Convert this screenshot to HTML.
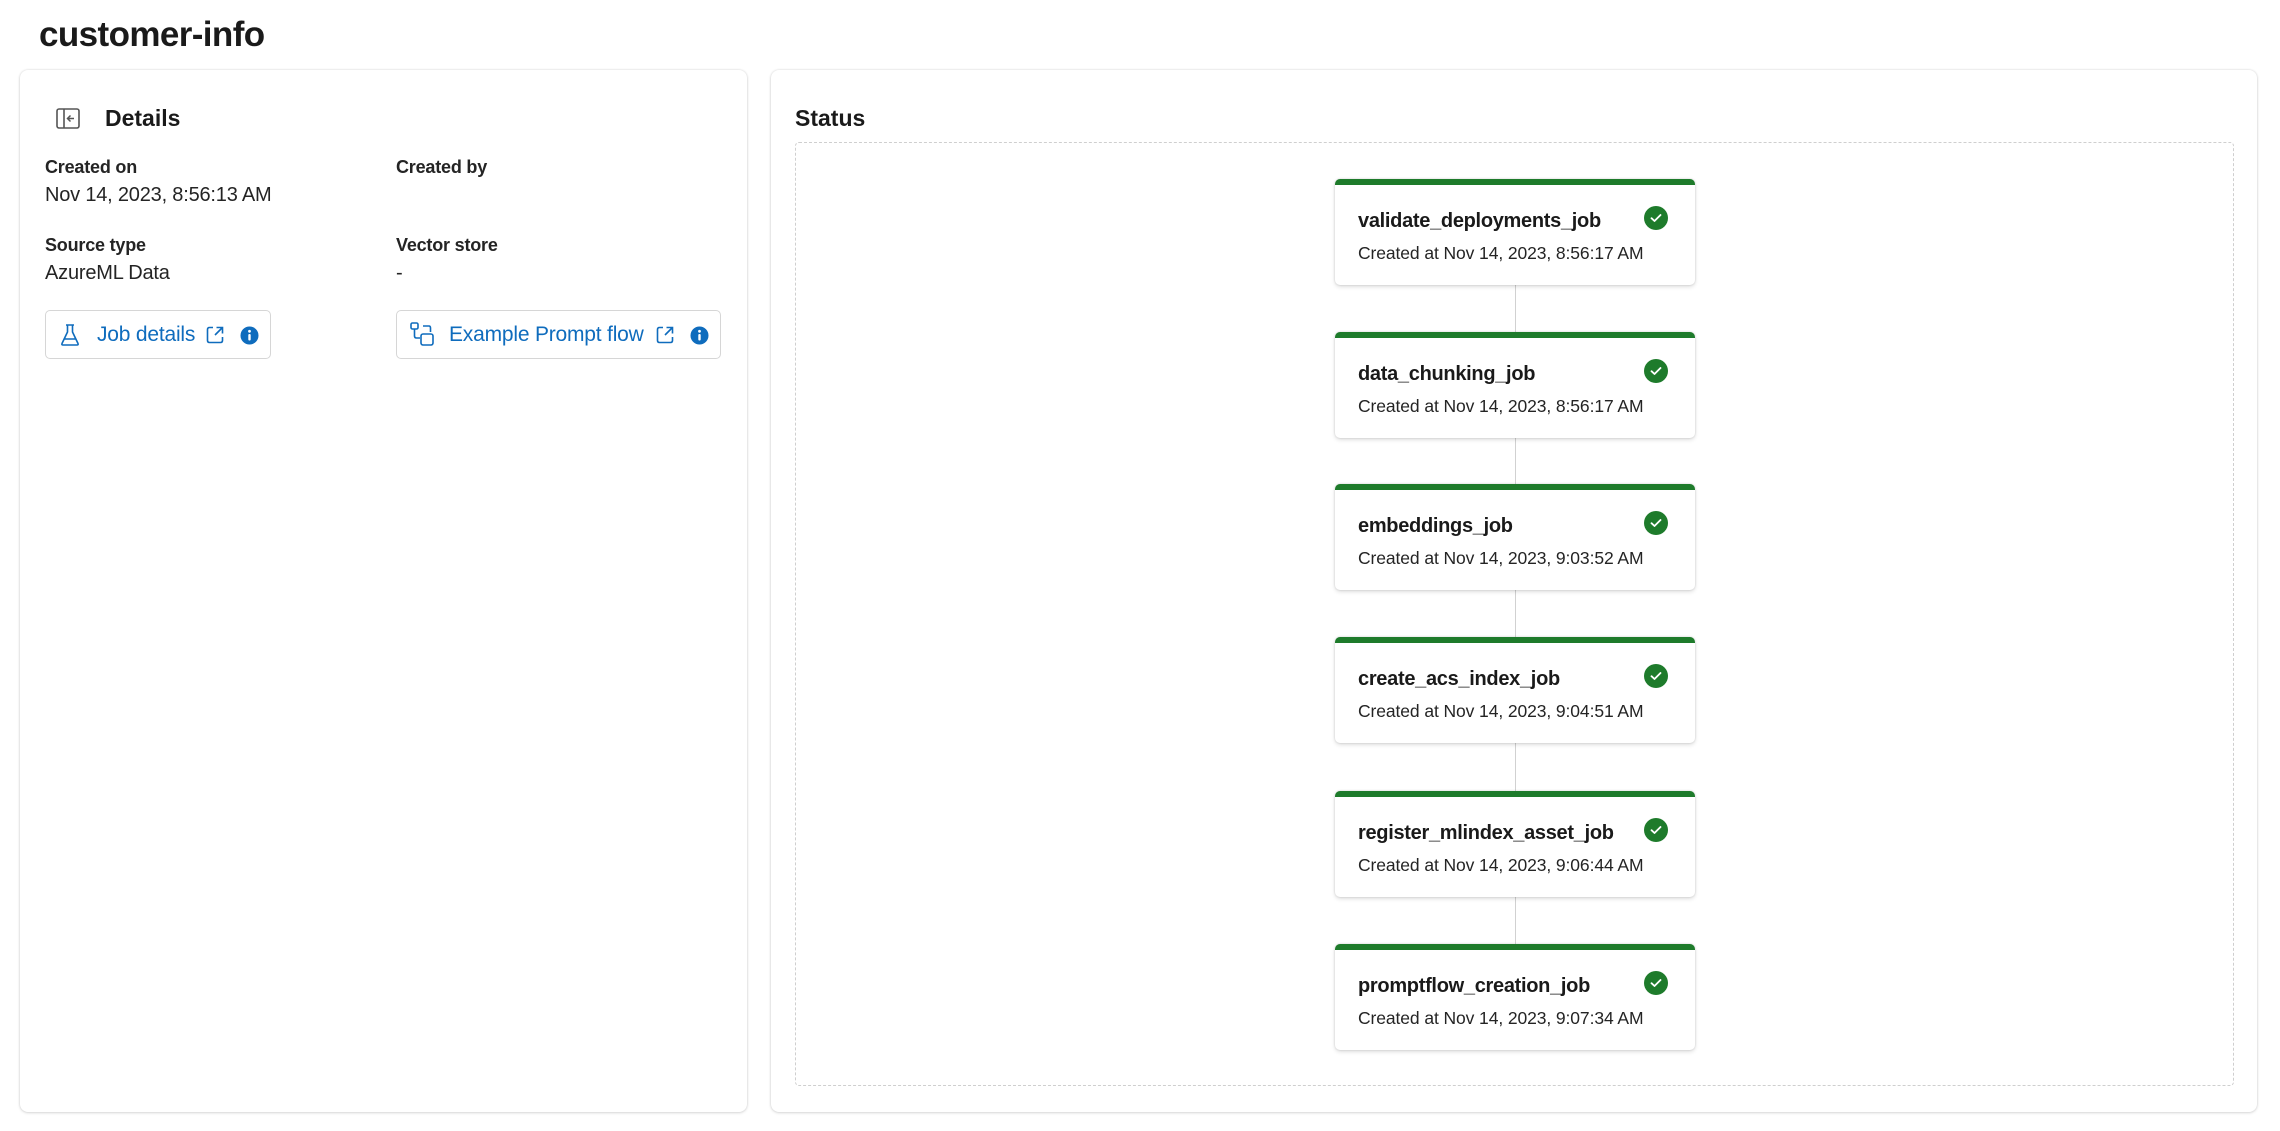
<!DOCTYPE html>
<html><head><meta charset="utf-8"><style>
*{box-sizing:border-box;margin:0;padding:0}
body{width:2280px;height:1131px;background:#fff;font-family:"Liberation Sans",sans-serif;color:#242424;position:relative;overflow:hidden}
.abs{position:absolute}
.panel{position:absolute;top:70px;height:1042px;background:#fff;border-radius:8px;box-shadow:0 0 2px rgba(0,0,0,.14),0 1px 3px rgba(0,0,0,.12)}
.lbl{position:absolute;font-size:18px;font-weight:bold;color:#242424;letter-spacing:-0.2px}
.val{position:absolute;font-size:20px;color:#242424;letter-spacing:-0.2px}
.btn{position:absolute;top:310px;height:49px;border:1px solid #d6d6d6;border-radius:5px;background:#fff}
.btn span.t{position:absolute;top:12px;font-size:21px;color:#0f6cbd;letter-spacing:-0.2px}
.card{position:absolute;left:1335px;width:360px;height:106px;background:#fff;border-radius:5px;box-shadow:0 0 2px rgba(0,0,0,.16),0 2px 4px rgba(0,0,0,.12);border-top:6px solid #1e7b2b}
.card .n{position:absolute;left:23px;top:25px;font-size:20px;font-weight:bold;color:#1a1a1a;letter-spacing:-0.3px}
.card .d{position:absolute;left:23px;top:58px;font-size:17.5px;color:#242424;letter-spacing:-0.1px}
.card svg{position:absolute;left:309px;top:21px}
.line{position:absolute;left:1515px;width:1px;background:#d1d1d1}
</style></head><body>
<div class="abs" style="left:39px;top:15px;font-size:35px;font-weight:bold;color:#1a1a1a;letter-spacing:-0.6px">customer-info</div>

<div class="panel" style="left:20px;width:727px"></div>
<div class="panel" style="left:771px;width:1486px"></div>

<svg class="abs" style="left:56px;top:108px" width="24" height="22" viewBox="0 0 24 22"><rect x="1" y="1" width="22" height="19" rx="2" fill="none" stroke="#555" stroke-width="1.6"/><line x1="8" y1="1" x2="8" y2="20" stroke="#555" stroke-width="1.6"/><path d="M18 10.5H11.5M14.5 7.5L11.5 10.5L14.5 13.5" fill="none" stroke="#555" stroke-width="1.5"/></svg>
<div class="abs" style="left:105px;top:105px;font-size:23px;font-weight:bold;color:#1a1a1a">Details</div>

<div class="lbl" style="left:45px;top:157px">Created on</div>
<div class="val" style="left:45px;top:184px">Nov 14, 2023, 8:56:13 AM</div>
<div class="lbl" style="left:396px;top:157px">Created by</div>
<div class="lbl" style="left:45px;top:235px">Source type</div>
<div class="val" style="left:45px;top:262px">AzureML Data</div>
<div class="lbl" style="left:396px;top:235px">Vector store</div>
<div class="val" style="left:396px;top:262px">-</div>

<div class="btn" style="left:45px;width:226px">
<svg class="abs" style="left:14px;top:12px" width="20" height="24" viewBox="0 0 20 24"><path d="M6 2H14M7.5 2V9L2 20.5Q1.5 22 3 22H17Q18.5 22 18 20.5L12.5 9V2M4 16H16" fill="none" stroke="#0f6cbd" stroke-width="1.6" stroke-linejoin="round"/></svg>
<span class="t" style="left:51px">Job details</span>
<svg class="abs" style="left:160px;top:15px" width="18" height="18" viewBox="0 0 18 18"><path d="M7 1.5H3.5Q1.5 1.5 1.5 3.5V14.5Q1.5 16.5 3.5 16.5H14.5Q16.5 16.5 16.5 14.5V11M10.5 1.5H16.5V7.5M16.5 1.5L9 9" fill="none" stroke="#0f6cbd" stroke-width="1.6"/></svg>
<svg class="abs" style="left:194px;top:15px" width="19" height="19" viewBox="0 0 19 19"><circle cx="9.5" cy="9.5" r="9" fill="#0f6cbd"/><rect x="8.3" y="8" width="2.4" height="6.5" rx="1" fill="#fff"/><circle cx="9.5" cy="5.3" r="1.4" fill="#fff"/></svg>
</div>

<div class="btn" style="left:396px;width:325px">
<svg class="abs" style="left:13px;top:11px" width="25" height="25" viewBox="0 0 25 25"><rect x="1" y="1" width="7" height="6" rx="1.5" fill="none" stroke="#0f6cbd" stroke-width="1.6"/><path d="M4.5 7V14Q4.5 16 6.5 16H10M13 4H19Q20.5 4 20.5 6V10" fill="none" stroke="#0f6cbd" stroke-width="1.6"/><rect x="11" y="12" width="12" height="11" rx="2" fill="none" stroke="#0f6cbd" stroke-width="1.6"/></svg>
<span class="t" style="left:52px">Example Prompt flow</span>
<svg class="abs" style="left:259px;top:15px" width="18" height="18" viewBox="0 0 18 18"><path d="M7 1.5H3.5Q1.5 1.5 1.5 3.5V14.5Q1.5 16.5 3.5 16.5H14.5Q16.5 16.5 16.5 14.5V11M10.5 1.5H16.5V7.5M16.5 1.5L9 9" fill="none" stroke="#0f6cbd" stroke-width="1.6"/></svg>
<svg class="abs" style="left:293px;top:15px" width="19" height="19" viewBox="0 0 19 19"><circle cx="9.5" cy="9.5" r="9" fill="#0f6cbd"/><rect x="8.3" y="8" width="2.4" height="6.5" rx="1" fill="#fff"/><circle cx="9.5" cy="5.3" r="1.4" fill="#fff"/></svg>
</div>

<div class="abs" style="left:795px;top:105px;font-size:23px;font-weight:bold;color:#1a1a1a">Status</div>
<div class="abs" style="left:795px;top:142px;width:1439px;height:944px;border:1px dashed #cfcfcf;border-radius:4px"></div>

<div class="line" style="top:285px;height:47px"></div>
<div class="line" style="top:438px;height:46px"></div>
<div class="line" style="top:590px;height:47px"></div>
<div class="line" style="top:743px;height:48px"></div>
<div class="line" style="top:897px;height:47px"></div>

<div class="card" style="top:179px"><div class="n">validate_deployments_job</div><div class="d">Created at Nov 14, 2023, 8:56:17 AM</div><svg width="24" height="24" viewBox="0 0 24 24"><circle cx="12" cy="12" r="12" fill="#1e7b2b"/><path d="M7.5 12.2L10.5 15L16.5 9" fill="none" stroke="#fff" stroke-width="1.8" stroke-linecap="round" stroke-linejoin="round"/></svg></div>
<div class="card" style="top:332px"><div class="n">data_chunking_job</div><div class="d">Created at Nov 14, 2023, 8:56:17 AM</div><svg width="24" height="24" viewBox="0 0 24 24"><circle cx="12" cy="12" r="12" fill="#1e7b2b"/><path d="M7.5 12.2L10.5 15L16.5 9" fill="none" stroke="#fff" stroke-width="1.8" stroke-linecap="round" stroke-linejoin="round"/></svg></div>
<div class="card" style="top:484px"><div class="n">embeddings_job</div><div class="d">Created at Nov 14, 2023, 9:03:52 AM</div><svg width="24" height="24" viewBox="0 0 24 24"><circle cx="12" cy="12" r="12" fill="#1e7b2b"/><path d="M7.5 12.2L10.5 15L16.5 9" fill="none" stroke="#fff" stroke-width="1.8" stroke-linecap="round" stroke-linejoin="round"/></svg></div>
<div class="card" style="top:637px"><div class="n">create_acs_index_job</div><div class="d">Created at Nov 14, 2023, 9:04:51 AM</div><svg width="24" height="24" viewBox="0 0 24 24"><circle cx="12" cy="12" r="12" fill="#1e7b2b"/><path d="M7.5 12.2L10.5 15L16.5 9" fill="none" stroke="#fff" stroke-width="1.8" stroke-linecap="round" stroke-linejoin="round"/></svg></div>
<div class="card" style="top:791px"><div class="n">register_mlindex_asset_job</div><div class="d">Created at Nov 14, 2023, 9:06:44 AM</div><svg width="24" height="24" viewBox="0 0 24 24"><circle cx="12" cy="12" r="12" fill="#1e7b2b"/><path d="M7.5 12.2L10.5 15L16.5 9" fill="none" stroke="#fff" stroke-width="1.8" stroke-linecap="round" stroke-linejoin="round"/></svg></div>
<div class="card" style="top:944px"><div class="n">promptflow_creation_job</div><div class="d">Created at Nov 14, 2023, 9:07:34 AM</div><svg width="24" height="24" viewBox="0 0 24 24"><circle cx="12" cy="12" r="12" fill="#1e7b2b"/><path d="M7.5 12.2L10.5 15L16.5 9" fill="none" stroke="#fff" stroke-width="1.8" stroke-linecap="round" stroke-linejoin="round"/></svg></div>
</body></html>
